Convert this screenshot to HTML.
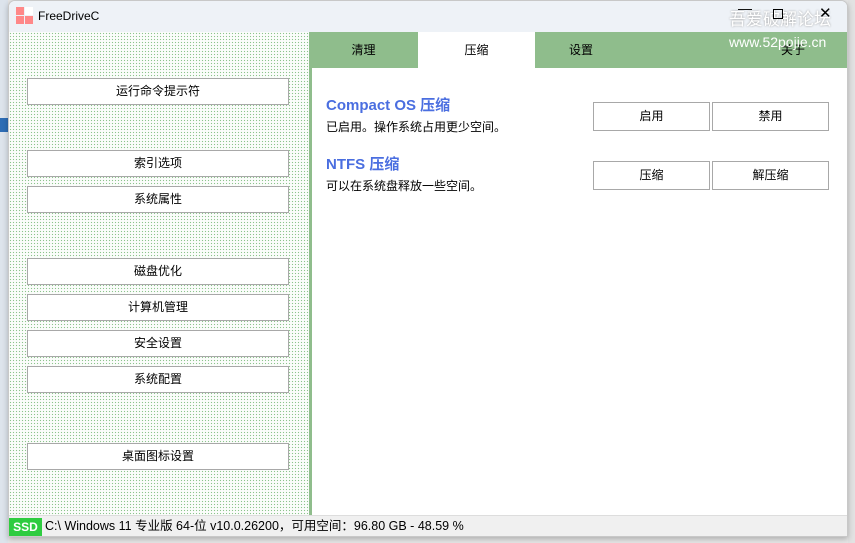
<!DOCTYPE html>
<html><head><meta charset="utf-8"><style>
*{margin:0;padding:0;box-sizing:border-box}
body{width:855px;height:543px;overflow:hidden;background:#e6e6e6;font-family:"Liberation Sans","Noto Sans CJK SC",sans-serif;font-size:12px;color:#000;position:relative}
.abs{position:absolute}
.win{left:8px;top:0;width:840px;height:537px;background:#fff;border:1px solid #c8c8c8;border-radius:7px 7px 0 0;overflow:hidden;box-shadow:0 2px 6px rgba(0,0,0,.25)}
.title{left:0;top:0;width:840px;height:31px;background:#eef2f7}
.left{left:0;top:31px;width:300px;height:483px;background-color:#fbfdfb;background-image:radial-gradient(#8cc48c 0.7px,transparent 0.8px);background-size:3px 3px}
.btn{position:absolute;background:#fff;border:1px solid #a8a8a8;text-align:center;font-size:12px}
.lb{left:18px;width:262px;height:27px;line-height:25px}
.rb{width:117px;height:29px;line-height:27px}
.tabs{left:300px;top:31px;width:540px;height:36px;background:#8fbd8c}
.tab{position:absolute;top:0;height:36px;line-height:36px;text-align:center;font-size:12px}
.content{left:303px;top:67px;width:537px;height:448px;background:#fff}
.gl{left:300px;top:67px;width:3px;height:448px;background:#8fbd8c}
.status{left:0;top:514px;width:840px;height:22px;background:#f0f0f0;border-top:1px solid #ddd;font-size:12.5px;line-height:21px}
h2{position:absolute;color:#4a6ee0;font-size:15px;font-weight:bold}
</style></head><body>
<div class="abs" style="left:0;top:0;width:8px;height:543px;background:#dde4ec"></div>
<div class="abs" style="left:0;top:118px;width:8px;height:14px;background:#2f6db5"></div>
<div class="abs" style="left:848px;top:0;width:7px;height:543px;background:#e2e2e2"></div>
<div class="abs win">
 <div class="abs title">
  <div class="abs" style="left:7px;top:6px;width:8px;height:8px;background:#f88"></div>
  <div class="abs" style="left:16px;top:6px;width:8px;height:8px;background:#fff"></div>
  <div class="abs" style="left:7px;top:15px;width:8px;height:8px;background:#f88"></div>
  <div class="abs" style="left:16px;top:15px;width:8px;height:8px;background:#f88"></div>
  <div class="abs" style="left:29px;top:8px;font-size:12px">FreeDriveC</div>
  <div class="abs" style="left:720px;top:4px;font-size:17px;color:#fff;text-shadow:0 0 2px #999">吾爱破解论坛</div>
  <div class="abs" style="left:729px;top:-1px;font-size:14px">—</div>
  <div class="abs" style="left:764px;top:8px;width:10px;height:10px;border:1px solid #000"></div>
  <div class="abs" style="left:810px;top:3px;font-size:15px">✕</div>
 </div>
 <div class="abs left">
  <div class="btn lb" style="top:46px">运行命令提示符</div>
  <div class="btn lb" style="top:118px">索引选项</div>
  <div class="btn lb" style="top:154px">系统属性</div>
  <div class="btn lb" style="top:226px">磁盘优化</div>
  <div class="btn lb" style="top:262px">计算机管理</div>
  <div class="btn lb" style="top:298px">安全设置</div>
  <div class="btn lb" style="top:334px">系统配置</div>
  <div class="btn lb" style="top:411px">桌面图标设置</div>
 </div>
 <div class="abs tabs">
  <div class="tab" style="left:0;width:109px">清理</div>
  <div class="tab" style="left:109px;width:117px;background:#fff">压缩</div>
  <div class="tab" style="left:226px;width:92px">设置</div>
  <div class="tab" style="left:449px;width:70px">关于</div>
  <div class="abs" style="left:420px;top:2px;font-size:14px;color:#fff">www.52pojie.cn</div>
 </div>
 <div class="abs gl"></div>
 <div class="abs content">
  <h2 style="left:14px;top:26px">Compact OS 压缩</h2>
  <div class="abs" style="left:14px;top:50px">已启用。操作系统占用更少空间。</div>
  <h2 style="left:14px;top:85px">NTFS 压缩</h2>
  <div class="abs" style="left:14px;top:109px">可以在系统盘释放一些空间。</div>
  <div class="btn rb" style="left:281px;top:34px">启用</div>
  <div class="btn rb" style="left:400px;top:34px">禁用</div>
  <div class="btn rb" style="left:281px;top:93px">压缩</div>
  <div class="btn rb" style="left:400px;top:93px">解压缩</div>
 </div>
 <div class="abs status">
  <span class="abs" style="left:0;top:2px;width:33px;height:18px;background:#2ecc40;color:#fff;font-weight:bold;text-align:center;line-height:18px;font-size:12px">SSD</span>
  <span class="abs" style="left:36px;top:0">C:\ Windows 11 专业版 64-位 v10.0.26200，可用空间：96.80 GB - 48.59 %</span>
 </div>
</div>
</body></html>
